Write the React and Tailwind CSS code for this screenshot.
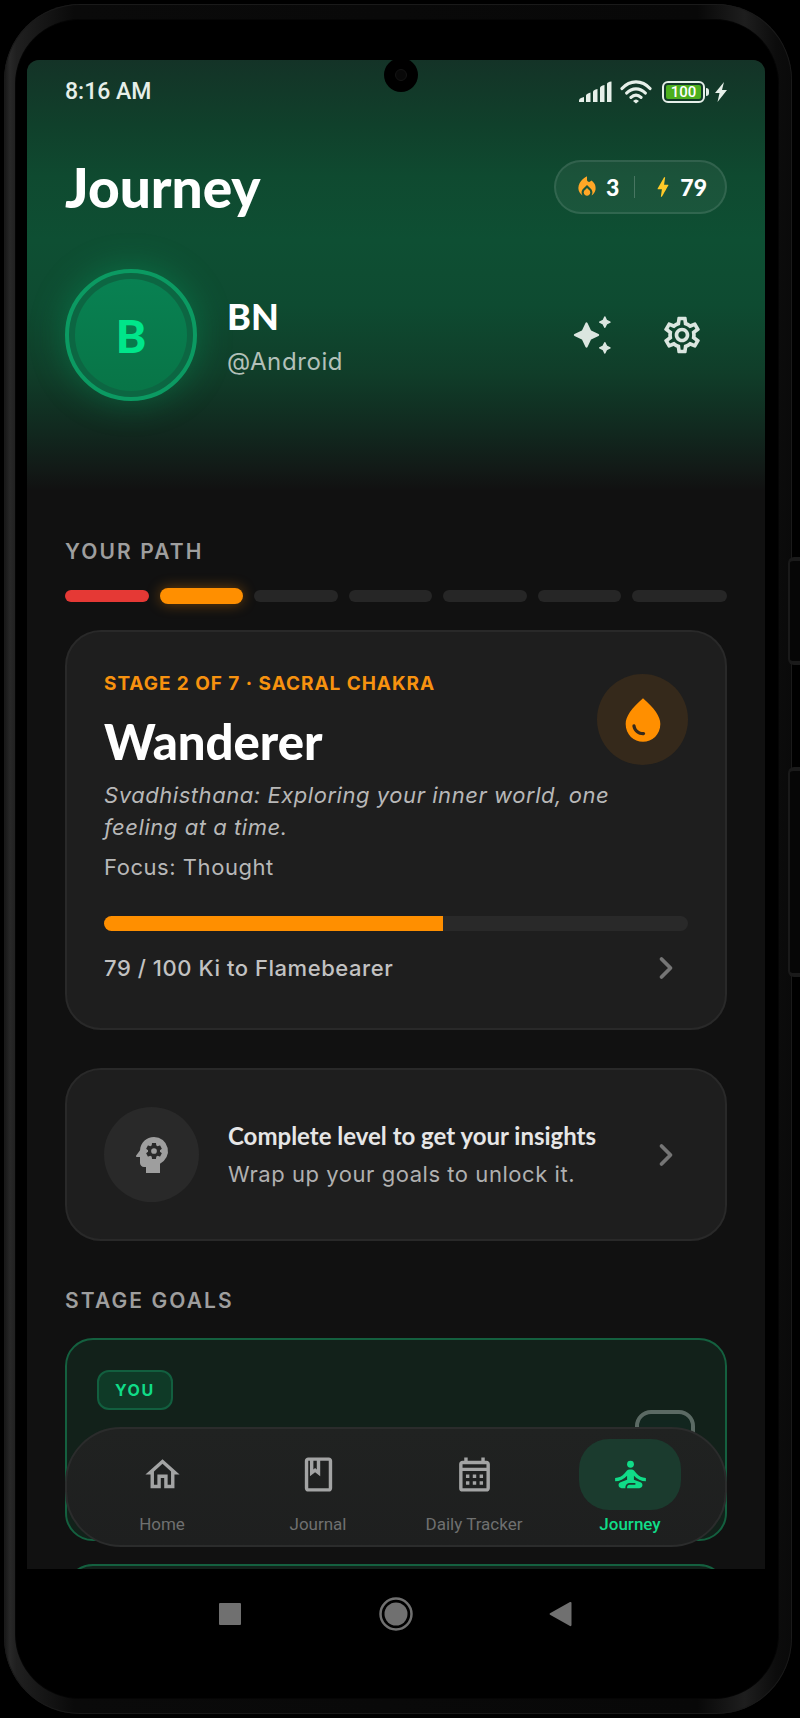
import React, { useState } from "react";
import {
  MdBolt,
  MdLocalFireDepartment,
  MdOutlineBook,
  MdOutlineCalendarMonth,
  MdOutlineHome,
  MdOutlineSettings,
  MdPsychology,
  MdSelfImprovement,
  MdWaterDrop,
} from "react-icons/md";
import { ChevronRight } from "lucide-react";

const stages = [
  "bg-[#e53935] h-3",
  "bg-[#ff8f00] h-4 shadow-[0_0_14px_rgba(255,143,0,0.4)]",
  "bg-[#262626] h-3",
  "bg-[#262626] h-3",
  "bg-[#262626] h-3",
  "bg-[#262626] h-3",
  "bg-[#262626] h-3",
];

const tabs = [
  { name: "Home", Icon: MdOutlineHome },
  { name: "Journal", Icon: MdOutlineBook },
  { name: "Daily Tracker", Icon: MdOutlineCalendarMonth },
  { name: "Journey", Icon: MdSelfImprovement },
];

const Sparkles = () => (
  <svg
    className="h-11 w-11"
    viewBox="0 0 24 24"
    fill="currentColor"
    stroke="currentColor"
    strokeWidth="1.200"
    strokeLinejoin="round"
  >
    <path d="M9 5.700 11 10 15.300 12 11 14 9 18.300 7 14 2.700 12 7 10z" />
    <path
      strokeWidth="0.800"
      d="M19 2.200 19.900 4.100 21.800 5 19.900 5.900 19 7.800 18.100 5.900 16.200 5 18.100 4.100zM19 16.200 19.900 18.100 21.800 19 19.900 19.900 19 21.800 18.100 19.900 16.200 19 18.100 18.100z"
    />
  </svg>
);

const StatusBar = () => (
  <div className="flex h-8 items-center justify-between text-[#e6efe9]">
    <span className="font-['Roboto',sans-serif] text-[23px] font-medium">8:16 AM</span>
    <div className="flex items-center">
      <svg className="h-[22px] w-[34px]" viewBox="0 0 34 22" fill="currentColor">
        <path d="M1 21v-1.500q0-2 2-2.500l3-1v5zM8 21v-6.500q0-1.500 4.500-3V21zM15 21V11q0-2 4.500-3v13zM22 21V7q0-2 4.500-3v17zM29 21V3q0-2 4.500-2.500V21z" />
      </svg>
      <svg
        className="ml-2 h-6 w-8"
        viewBox="0 0 32 24"
        fill="none"
        stroke="currentColor"
        strokeWidth="3.200"
        strokeLinecap="round"
      >
        <path d="M2 8.500C10-.3 22-.3 30 8.500M6.700 13c5.300-5.600 13.300-5.600 18.600 0M11 17.300c3-2.800 7-2.800 10 0" />
        <path d="M13 21q3-3 6 0l-3 2.500z" fill="currentColor" stroke="none" />
      </svg>
      <div className="ml-2.5 flex h-[22px] w-[43px] items-center justify-center rounded-[6px] border-2 border-current p-0.5">
        <span className="flex h-full w-full items-center justify-center rounded-[2px] bg-[#4caf1e] font-['Roboto',sans-serif] text-[15px] leading-none font-medium text-white">
          100
        </span>
      </div>
      <span className="ml-px h-2 w-[3px] rounded-r bg-current" />
      <svg className="ml-1.5 h-5 w-3" viewBox="0 0 12 20" fill="currentColor">
        <path d="M9 0 0 11h4.500L2.500 20 12 8H7z" />
      </svg>
    </div>
  </div>
);

const Header = () => (
  <header className="bg-[linear-gradient(180deg,#143327_0%,#10402b_15%,#0f4a30_27%,#0e4f33_42%,#0e4b31_57%,#103d29_73%,#11291f_86%,#121a17_95%,#111111_100%)] px-[38px] pt-4 pb-[89px]">
    <StatusBar />
    <div className="mt-[52px] flex h-[54px] items-center justify-between">
      <h1 className="font-['Lato',sans-serif] text-[55px] leading-[54px] font-black text-white">
        Journey
      </h1>
      <div className="flex h-[54px] items-center rounded-full border-2 border-white/10 bg-white/5 px-[18px] font-['Lato',sans-serif] text-[23px] font-black text-white">
        <MdLocalFireDepartment className="h-[26px] w-[26px] text-[#ffa726]" />
        <span className="ml-1.5">3</span>
        <span className="mx-[15px] h-[22px] w-px bg-white/20" />
        <MdBolt className="h-[26px] w-[26px] text-[#ffca28]" />
        <span className="ml-1">79</span>
      </div>
    </div>
    <div className="mt-[55px] flex items-center">
      <div className="flex h-[132px] w-[132px] shrink-0 items-center justify-center rounded-full border-4 border-[#0b9a62] bg-[#0c6642] shadow-[0_0_36px_rgba(0,200,120,0.3)]">
        <div className="flex h-28 w-28 items-center justify-center rounded-full bg-linear-to-b from-[#088152] to-[#087547] font-['Lato',sans-serif] text-[46px] font-black text-[#00e68a]">
          B
        </div>
      </div>
      <div className="ml-[30px] flex-1 pt-2">
        <h2 className="font-['Lato',sans-serif] text-4xl leading-[46px] font-black text-white">BN</h2>
        <p className="font-['Inter',sans-serif] text-2xl leading-[46px] tracking-wide text-[#b3c0b9]">
          @Android
        </p>
      </div>
      <div className="mr-[23px] flex gap-[46px] text-[#dbe6e0]">
        <button type="button" aria-label="Insights">
          <Sparkles />
        </button>
        <button type="button" aria-label="Settings">
          <MdOutlineSettings className="h-11 w-11" />
        </button>
      </div>
    </div>
  </header>
);

const SectionLabel = ({ children }) => (
  <h2 className="font-['Inter',sans-serif] text-[21px] leading-7 font-semibold tracking-widest text-[#9e9e9e]">
    {children}
  </h2>
);

const StageCard = () => (
  <article className="mt-[26px] rounded-[36px] border-2 border-[#292929] bg-[#1e1e1e] px-[37px] pt-[38px] pb-[42px] font-['Inter',sans-serif]">
    <div className="flex items-center justify-between">
      <div>
        <p className="text-[19px] leading-7 font-bold tracking-wider text-[#f7920f]">
          STAGE 2 OF 7 · SACRAL CHAKRA
        </p>
        <h3 className="mt-[15px] font-['Lato',sans-serif] text-[49px] leading-[56px] font-black text-white">
          Wanderer
        </h3>
      </div>
      <div className="flex h-[91px] w-[91px] items-center justify-center rounded-full bg-[#35291b]">
        <MdWaterDrop className="h-[52px] w-[52px] text-[#ff8f00]" />
      </div>
    </div>
    <p className="mt-2.5 text-[22px] leading-8 tracking-wide text-[#b8b8b8] italic">
      Svadhisthana: Exploring your inner world, one feeling at a time.
    </p>
    <p className="mt-2 text-[22px] leading-8 tracking-wide text-[#b8b8b8]">Focus: Thought</p>
    <div className="mt-[33px] h-[15px] overflow-hidden rounded-full bg-[#292929]">
      <div className="h-full w-[58%] bg-[#ff8f00]" />
    </div>
    <div className="mt-[19px] flex h-9 items-center justify-between">
      <span className="text-[22px] font-medium tracking-wide text-[#c2c2c2]">
        79 / 100 Ki to Flamebearer
      </span>
      <ChevronRight className="mr-1 h-9 w-9 text-[#757575]" strokeWidth={2.5} />
    </div>
  </article>
);

const InsightsCard = () => (
  <article className="mt-[38px] flex items-center rounded-[36px] border-2 border-[#292929] bg-[#1e1e1e] px-[37px] py-[37px]">
    <div className="flex h-[95px] w-[95px] shrink-0 items-center justify-center rounded-full bg-[#292929]">
      <MdPsychology className="h-12 w-12 text-[#9e9e9e]" />
    </div>
    <div className="ml-[29px] flex-1">
      <h3 className="font-['Lato',sans-serif] text-2xl leading-[38px] font-bold text-[#e6e6e6]">
        Complete level to get your insights
      </h3>
      <p className="font-['Inter',sans-serif] text-[22px] leading-[38px] tracking-wide text-[#b0b0b0]">
        Wrap up your goals to unlock it.
      </p>
    </div>
    <ChevronRight className="mr-1 h-9 w-9 text-[#757575]" strokeWidth={2.5} />
  </article>
);

const GoalCard = () => (
  <label className="flex h-[203px] items-center justify-between rounded-[28px] border-2 border-[#14603f] bg-[#12211a] px-[30px]">
    <span className="mt-[30px] self-start rounded-[12px] border-2 border-[#125f3f] bg-[#0f3a27] px-4 font-['Inter',sans-serif] text-base leading-9 font-bold tracking-widest text-[#10dc88]">
      YOU
    </span>
    <input
      type="checkbox"
      className="h-[60px] w-[60px] appearance-none rounded-[16px] border-4 border-[#5b6a64] bg-[#12261f]"
    />
  </label>
);

const BottomNav = () => {
  const [active, setActive] = useState("Journey");

  return (
    <nav className="absolute inset-x-[38px] bottom-[22px] grid h-[120px] grid-cols-4 rounded-[56px] border-2 border-[#2b2c2c] bg-linear-to-b from-[#202221] to-[#1e1f1f] px-[17px] pt-2.5 font-['Roboto',sans-serif]">
      {tabs.map(({ name, Icon }) => (
        <button
          key={name}
          type="button"
          onClick={() => setActive(name)}
          className={
            name === active
              ? "flex flex-col items-center font-medium text-[#10dc88]"
              : "flex flex-col items-center text-[#6f7070]"
          }
        >
          <span
            className={
              name === active
                ? "flex h-[71px] w-[102px] items-center justify-center rounded-[30px] bg-[#1b3b2e]"
                : "flex h-[71px] w-[102px] items-center justify-center text-[#a3a4a4]"
            }
          >
            <Icon className="h-[41px] w-[41px]" />
          </span>
          <span className="text-[17px] leading-7">{name}</span>
        </button>
      ))}
    </nav>
  );
};

const SystemNav = () => (
  <div className="flex h-[129px] items-start justify-center gap-[132px] pt-7 text-[#707070]">
    <button type="button" aria-label="Recents">
      <svg className="h-[34px] w-[34px]" viewBox="0 0 34 34" fill="currentColor">
        <rect x="6" y="6" width="22" height="22" rx="1" />
      </svg>
    </button>
    <button type="button" aria-label="Home screen">
      <svg className="h-[34px] w-[34px]" viewBox="0 0 34 34" fill="currentColor">
        <circle cx="17" cy="17" r="15.500" fill="none" stroke="currentColor" strokeWidth="2.500" />
        <circle cx="17" cy="17" r="11.500" />
      </svg>
    </button>
    <button type="button" aria-label="Back">
      <svg className="h-[34px] w-[34px]" viewBox="0 0 34 34" fill="currentColor">
        <path d="M5 16.200 25 5q1.500-.5 1.500 1v22q0 1.500-1.500 1L5 17.800q-1-.8 0-1.600z" />
      </svg>
    </button>
  </div>
);

const App = () => (
  <div className="relative min-h-screen overflow-hidden bg-black py-1 pr-2 pl-1">
    {/* phone body */}
    <div className="relative rounded-[76px] bg-[linear-gradient(90deg,#161616_0,#282828_6px,#202020_12px,#0a0a0a_70px,#080808_88%,#1e1e1e_94%,#0c0c0c_98%,#0a0a0a_100%)] pt-4 pr-3.5 pb-4 pl-3 shadow-[inset_0_0_0_1px_#1a1a1a]">
      <div className="rounded-[64px] bg-black pt-10 pr-[13px] pl-[11px] shadow-[0_0_0_1px_#050505]">
        <main className="relative overflow-hidden rounded-t-[12px] bg-[#111111]">
          <Header />
          <section className="px-[38px] pt-12">
            <SectionLabel>YOUR PATH</SectionLabel>
            <div className="mt-[22px] grid h-4 grid-cols-7 items-center">
              {stages.map((style, i) => (
                <div key={i} className="pr-[11px] last:pr-0">
                  <div className={`rounded-full ${style}`} />
                </div>
              ))}
            </div>
            <StageCard />
            <InsightsCard />
          </section>
          <section className="px-[38px] pt-[46px]">
            <SectionLabel>STAGE GOALS</SectionLabel>
            <div className="mt-[23px]">
              <GoalCard />
            </div>
            <div className="mt-[23px] h-[5px] overflow-hidden">
              <div className="h-20 rounded-[28px] border-2 border-[#14603f] bg-[#12211a]" />
            </div>
          </section>
          <BottomNav />
        </main>
        <SystemNav />
      </div>
      {/* front camera */}
      <span className="absolute top-[54px] left-1/2 -ml-3.5 flex h-[34px] w-[34px] items-center justify-center rounded-full bg-black">
        <span className="h-3 w-3 rounded-full border border-[#141414] bg-[#080808]" />
      </span>
    </div>

    {/* side keys */}
    <span className="absolute top-[557px] right-0 h-[108px] w-3 rounded-l-md border-y-4 border-l-2 border-[#1a1a1a] bg-[#060606]" />
    <span className="absolute top-[767px] right-0 h-[210px] w-3 rounded-l-md border-y-4 border-l-2 border-[#1a1a1a] bg-[#060606]" />
  </div>
);

export default App;
